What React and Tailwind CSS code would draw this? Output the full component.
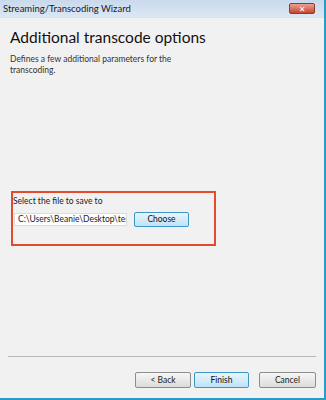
import React from 'react';

export default function App() {
  const font = { fontFamily: 'Lato, "Open Sans", "DejaVu Sans", sans-serif' };
  return (
    <div className="w-[326px] h-[400px] overflow-hidden bg-[#f1f1f1] flex flex-col border-r-2 border-b-2 border-solid border-[#2a9bc9]" style={font}>
      {/* title bar */}
      <div className="h-[18px] shrink-0 flex items-center justify-between pl-[3px] pr-[9px] bg-gradient-to-b from-[#c9d9ec] to-[#dce7f4] border-b border-[#d8e2ee]">
        <span className="text-[9.5px] text-[#1a1a1a] leading-none">Streaming/Transcoding Wizard</span>
        <div className="w-[26px] h-[11px] rounded-[2px] bg-gradient-to-b from-[#e9a291] to-[#c4432d] border border-[#8f3a2b] flex items-center justify-center text-white text-[8px] font-bold leading-none">✕</div>
      </div>

      <div className="flex-1 flex flex-col pl-[10px] pr-[8px]">
        <h1 className="mt-[9px] text-[15.5px] leading-[21px] text-[#111]">Additional transcode options</h1>
        <p className="mt-[6px] w-[170px] text-[8.5px] leading-[11px] text-[#333]">Defines a few additional parameters for the transcoding.</p>

        <div className="mt-[115px] ml-[1px] w-[205px] h-[55px] border-2 border-solid border-[#e64a2e] flex flex-col">
          <span className="mt-[3px] text-[8.5px] leading-[11px] text-[#222]">Select the file to save to</span>
          <div className="mt-[5px] flex items-center gap-[7px] pl-[1px]">
            <div className="w-[113px] h-[13px] shrink-0 bg-white border border-[#dcdcdc] flex items-center pl-[3px] overflow-hidden whitespace-nowrap text-[8.5px] text-[#222]">C:\Users\Beanie\Desktop\test</div>
            <div className="w-[55px] h-[15px] rounded-[2px] border border-[#3c97c8] bg-gradient-to-b from-[#e8f5fd] to-[#bfe2f7] flex items-center justify-center text-[8.5px] text-[#111]">Choose</div>
          </div>
        </div>

        <div className="mt-auto mb-[10px] flex flex-col">
          <div className="h-px bg-[#b9b9b9] ml-[-2px]" />
          <div className="mt-[15px] flex justify-end gap-[3px]">
            <div className="w-[56px] h-[16px] rounded-[2px] border border-[#8d8d8d] bg-gradient-to-b from-[#f6f6f6] to-[#dcdcdc] flex items-center justify-center text-[8.5px] text-[#222]">&lt; Back</div>
            <div className="w-[55px] h-[16px] rounded-[2px] border border-[#3c97c8] bg-gradient-to-b from-[#e8f5fd] to-[#bfe2f7] flex items-center justify-center text-[8.5px] text-[#111]">Finish</div>
            <div className="ml-[7px] w-[57px] h-[16px] rounded-[2px] border border-[#8d8d8d] bg-gradient-to-b from-[#f6f6f6] to-[#dcdcdc] flex items-center justify-center text-[8.5px] text-[#222]">Cancel</div>
          </div>
        </div>
      </div>
    </div>
  );
}
